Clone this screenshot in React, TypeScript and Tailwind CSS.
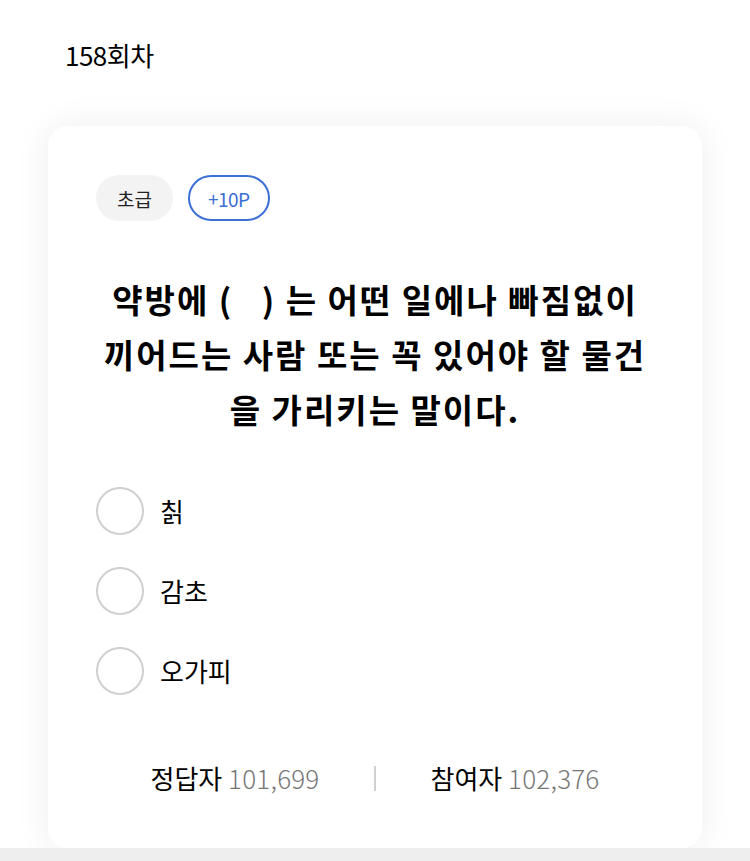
const options = ['칡', '감초', '오가피'];

function Chip({ children, variant }: { children: React.ReactNode; variant: 'level' | 'point' }) {
  const base = 'h-[46px] rounded-full flex items-center text-[19px] leading-none';
  if (variant === 'level') {
    return <span className={`${base} px-[21px] bg-[#f3f3f3] text-[#222]`}>{children}</span>;
  }
  return (
    <span className={`${base} px-[18px] border-2 border-[#3b6fd6] text-[#3b6fd6] tracking-[-0.5px]`}>
      {children}
    </span>
  );
}

export default function App() {
  return (
    <div
      className="w-[750px] min-h-[861px] bg-white text-black"
      style={{ fontFamily: '"Noto Sans CJK KR", "Noto Sans", sans-serif' }}
    >
      <div className="px-[48px] pt-[35px]">
        <h1 className="pl-[17px] text-[26px] leading-[39px] tracking-[-0.5px] font-normal">158회차</h1>

        <div className="mt-[52px] rounded-[20px] bg-white shadow-[0_0_36px_rgba(0,0,0,0.07)] px-[48px] pt-[49px] pb-[52px]">
          <div className="flex gap-[15px]">
            <Chip variant="level">초급</Chip>
            <Chip variant="point">+10P</Chip>
          </div>

          <p className="mt-[51px] -mx-[10px] text-center text-[33px] leading-[55px] font-bold tracking-[2px] whitespace-nowrap">
            약방에 (&nbsp;&nbsp;&nbsp;) 는 어떤 일에나 빠짐없이
            <br />
            끼어드는 사람 또는 꼭 있어야 할 물건
            <br />을 가리키는 말이다.
          </p>

          <ul className="mt-[50px] flex flex-col gap-[32px]">
            {options.map((opt) => (
              <li key={opt} className="flex items-center gap-[16px]">
                <span className="w-[48px] h-[48px] rounded-full border-2 border-[#cfcfcf] bg-white shrink-0" />
                <span className="text-[26px] leading-none">{opt}</span>
              </li>
            ))}
          </ul>

          <div className="mt-[65px] flex items-center text-[26px] leading-[36px]">
            <div className="flex-1 text-center">
              정답자 <span className="text-[#777] font-light tracking-[0.2px]">101,699</span>
            </div>
            <span className="w-[2px] h-[25px] bg-[#d0d0d0]" />
            <div className="flex-1 text-center">
              참여자 <span className="text-[#777] font-light tracking-[0.2px]">102,376</span>
            </div>
          </div>
        </div>
      </div>
      <div className="h-[40px] bg-[#eeeeee]" />
    </div>
  );
}
